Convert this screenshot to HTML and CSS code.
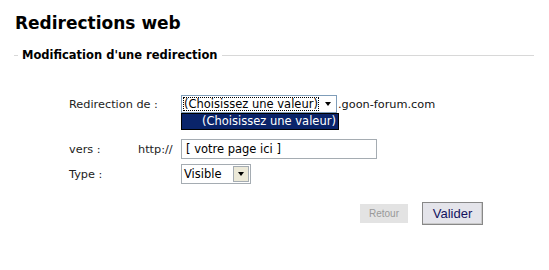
FILE: index.html
```html
<!DOCTYPE html>
<html lang="fr">
<head>
    <meta charset="UTF-8">
    <title>Redirections web</title>
    <link rel="stylesheet" href="styles.css">
</head>
<body>

    <h1 class="page-title">Redirections web</h1>

    <fieldset class="box">
        <legend class="box-title">Modification d'une redirection</legend>

        <div class="form">
            <div class="row">
                <span class="label">Redirection de :</span>
                <span class="prefix"></span>
                <div class="field">
                    <div class="combo combo-wide is-open">
                        <span class="combo-value is-focused">(Choisissez une valeur)</span>
                        <span class="combo-btn"><span class="arrow"></span></span>
                        <div class="combo-list">
                            <div class="combo-option is-selected">(Choisissez une valeur)</div>
                        </div>
                    </div>
                    <span class="suffix">.goon-forum.com</span>
                </div>
            </div>

            <div class="row row-vers">
                <span class="label">vers :</span>
                <span class="prefix">http://</span>
                <div class="field">
                    <input class="text-input" type="text" value="[ votre page ici ]">
                </div>
            </div>

            <div class="row row-type">
                <span class="label">Type :</span>
                <span class="prefix"></span>
                <div class="field">
                    <div class="combo combo-small">
                        <span class="combo-value">Visible</span>
                        <span class="combo-btn"><span class="arrow"></span></span>
                    </div>
                </div>
            </div>
        </div>

        <div class="actions">
            <button class="btn btn-back" disabled>Retour</button>
            <button class="btn btn-submit">Valider</button>
        </div>
    </fieldset>

</body>
</html>
```

FILE: styles.css
```css
/* Redirections web - old school admin form */
html, body {
    margin: 0;
    background: #fff;
}

body {
    font-family: Verdana, 'DejaVu Sans', sans-serif;
    font-size: 11.3px;
    color: #222;
    padding: 12px 15px 0 14px;
}

.page-title {
    font-size: 17px;
    font-weight: bold;
    color: #000;
    margin: 0 0 0 1px;
    line-height: 22px;
}

.box {
    margin: 14px 0 0 0;
    padding: 0;
    border: 0;
    border-top: 1px solid #d8d8d8;
    width: 520px;
}

.box-title {
    font-weight: bold;
    font-size: 11.5px;
    color: #000;
    padding: 0 4px;
    margin-left: 4px;
}

.form {
    padding: 33px 0 0 55px;
    display: flex;
    flex-direction: column;
}

.row {
    display: grid;
    grid-template-columns: 69px 43px auto;
    align-items: center;
    height: 18px;
}

.label,
.prefix {
    white-space: nowrap;
}

.row-vers {
    margin-top: 26px;
    height: 20px;
}

.row-type {
    margin-top: 5px;
    height: 20px;
}

.field {
    display: flex;
    align-items: center;
}

.suffix {
    margin-left: 1px;
    color: #111;
}

.combo {
    position: relative;
    display: flex;
    height: 18px;
    box-sizing: border-box;
    border: 1px solid #7f9db9;
    background: #fff;
}

.combo-wide {
    width: 156px;
}

.combo-small {
    width: 70px;
    height: 20px;
    border-color: #a5acb2;
}

.combo-value {
    flex: 1;
    line-height: 14px;
    padding: 0 1px;
    margin: 1px;
    white-space: nowrap;
    color: #000;
    font-size: 11.5px;
}

.combo-small .combo-value {
    line-height: 16px;
}

.combo-value.is-focused {
    outline: 1px dotted #000;
    outline-offset: -1px;
}

.combo-btn {
    width: 15px;
    margin: 1px;
    display: flex;
    align-items: center;
    justify-content: center;
    background: #fff;
}

.combo-small .combo-btn {
    background: #ece9d8;
    border: 1px solid #a5acb2;
    width: 14px;
    margin: 1px 1px 1px 0;
}

.arrow {
    width: 0;
    height: 0;
    border-left: 3.5px solid transparent;
    border-right: 3.5px solid transparent;
    border-top: 4px solid #000;
}

.combo-list {
    position: absolute;
    left: -1px;
    top: 17px;
    width: 156px;
    border: 1px solid #000;
    background: #fff;
    z-index: 2;
}

.combo-option {
    line-height: 15px;
    font-size: 11.5px;
    padding-left: 20px;
    white-space: nowrap;
}

.combo-option.is-selected {
    background: #0a246a;
    color: #fff;
}

.text-input {
    width: 196px;
    height: 20px;
    box-sizing: border-box;
    border: 1px solid #a5acb2;
    font-family: Verdana, 'DejaVu Sans', sans-serif;
    font-size: 11.5px;
    padding: 0 4px;
    color: #000;
}

.actions {
    display: flex;
    align-items: center;
    gap: 14px;
    padding: 18px 0 0 346px;
}

.btn {
    font-family: Arial, 'Liberation Sans', sans-serif;
}

.btn-back {
    background: #e3e3e3;
    border: 0;
    color: #999;
    font-size: 10px;
    width: 48px;
    height: 19px;
}

.btn-submit {
    background: #e4e4ea;
    border: 1px solid #888;
    box-shadow: inset -1px -1px 0 #c9c9c9;
    color: #12125e;
    font-size: 13px;
    width: 61px;
    height: 23px;
}
```
